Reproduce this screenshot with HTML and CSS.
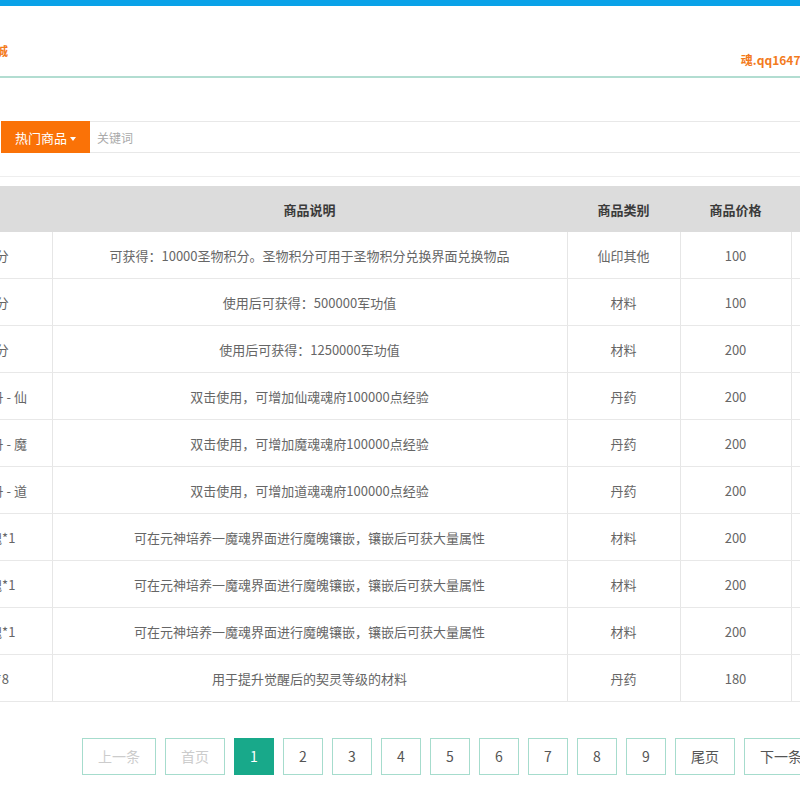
FILE: index.html
```html
<!DOCTYPE html>
<html lang="zh-CN">
<head>
  <meta charset="UTF-8" />
  <meta name="viewport" content="width=device-width, initial-scale=1.0" />
  <title>仙魂商城</title>
  <link rel="stylesheet" href="styles.css">
</head>
<body>
  <div class="topbar"></div>
  <div class="page">
    <div class="header">
      <span class="title">仙魂商城</span>
      <span class="contact">魂.qq1647208856</span>
    </div>

    <form class="search">
      <button type="button" class="hot">热门商品<span class="caret"></span></button>
      <input class="keyword" type="text" placeholder="关键词">
    </form>
    <div class="divider"></div>

    <table class="goods">
      <colgroup>
        <col class="c-name">
        <col class="c-desc">
        <col class="c-type">
        <col class="c-price">
        <col class="c-op">
      </colgroup>
      <thead>
        <tr>
          <th>名称</th>
          <th>商品说明</th>
          <th>商品类别</th>
          <th>商品价格</th>
          <th>操作</th>
        </tr>
      </thead>
      <tbody>
        <tr><td>圣物积分</td><td>可获得：10000圣物积分。圣物积分可用于圣物积分兑换界面兑换物品</td><td>仙印其他</td><td>100</td><td>兑换</td></tr>
        <tr><td>军功积分</td><td>使用后可获得：500000军功值</td><td>材料</td><td>100</td><td>兑换</td></tr>
        <tr><td>军功积分</td><td>使用后可获得：1250000军功值</td><td>材料</td><td>200</td><td>兑换</td></tr>
        <tr><td>魂府经验丹 - 仙</td><td>双击使用，可增加仙魂魂府100000点经验</td><td>丹药</td><td>200</td><td>兑换</td></tr>
        <tr><td>魂府经验丹 - 魔</td><td>双击使用，可增加魔魂魂府100000点经验</td><td>丹药</td><td>200</td><td>兑换</td></tr>
        <tr><td>魂府经验丹 - 道</td><td>双击使用，可增加道魂魂府100000点经验</td><td>丹药</td><td>200</td><td>兑换</td></tr>
        <tr><td>上品魔魄*1</td><td>可在元神培养一魔魂界面进行魔魄镶嵌，镶嵌后可获大量属性</td><td>材料</td><td>200</td><td>兑换</td></tr>
        <tr><td>中品魔魄*1</td><td>可在元神培养一魔魂界面进行魔魄镶嵌，镶嵌后可获大量属性</td><td>材料</td><td>200</td><td>兑换</td></tr>
        <tr><td>下品魔魄*1</td><td>可在元神培养一魔魂界面进行魔魄镶嵌，镶嵌后可获大量属性</td><td>材料</td><td>200</td><td>兑换</td></tr>
        <tr><td>契灵石*8</td><td>用于提升觉醒后的契灵等级的材料</td><td>丹药</td><td>180</td><td>兑换</td></tr>
      </tbody>
    </table>

    <div class="pager">
      <a class="disabled">上一条</a>
      <a class="disabled">首页</a>
      <a class="active">1</a>
      <a>2</a>
      <a>3</a>
      <a>4</a>
      <a>5</a>
      <a>6</a>
      <a>7</a>
      <a>8</a>
      <a>9</a>
      <a>尾页</a>
      <a>下一条</a>
    </div>
  </div>
</body>
</html>
```

FILE: styles.css
```css
body {
  margin: 0;
  font-family: "Noto Sans CJK SC", "Liberation Sans", sans-serif;
  font-size: 13px;
  color: #666;
  background-color: #fff;
  overflow: hidden;
}

.topbar {
  height: 6px;
  background-color: #0aa2e8;
}

.page {
  width: 1072px;
  margin-left: -86px;
}

.header {
  display: flex;
  align-items: flex-start;
  height: 70px;
  padding: 0 46px;
  border-bottom: 2px solid #b2ddd1;
}

.title {
  margin-top: 37px;
  font-size: 12px;
  font-weight: bold;
  line-height: 16px;
  color: #f37b1d;
}

.contact {
  margin-top: 46px;
  margin-left: auto;
  margin-right: 97px;
  font-size: 12px;
  font-weight: bold;
  line-height: 16px;
  color: #f37b1d;
}

.search {
  display: flex;
  height: 32px;
  margin: 43px 0 0 87px;
}

.hot {
  width: 89px;
  border: none;
  background-color: #fa7207;
  color: #fff;
  font-family: inherit;
  font-size: 13px;
  padding: 0;
}

.caret {
  display: inline-block;
  margin-left: 3px;
  vertical-align: middle;
  border-top: 4px solid #fff;
  border-left: 3px solid transparent;
  border-right: 3px solid transparent;
}

.keyword {
  flex: 1;
  border: 1px solid #e8e8e8;
  border-left: none;
  padding: 0 7px;
  font-family: inherit;
  font-size: 12px;
  outline: none;
}

.keyword::placeholder {
  color: #aaa;
}

.divider {
  margin-top: 23px;
  border-top: 1px solid #eeeeee;
}

.goods {
  width: 100%;
  margin-top: 9px;
  border-collapse: collapse;
  table-layout: fixed;
  text-align: center;
}

.c-name { width: 138px; }
.c-desc { width: 515px; }
.c-type { width: 113px; }
.c-price { width: 111px; }

.goods th {
  height: 46px;
  padding: 0;
  background-color: #dcdcdc;
  color: #3a3a3a;
  font-weight: bold;
}

.goods td {
  height: 46px;
  padding: 0;
  border-right: 1px solid #e6e6e6;
  border-bottom: 1px solid #e8e8e8;
  white-space: nowrap;
  overflow: hidden;
}

.pager {
  display: flex;
  justify-content: center;
  gap: 9px;
  margin-top: 36px;
}

.pager a {
  box-sizing: border-box;
  min-width: 40px;
  height: 37px;
  padding: 0 15px;
  border: 1px solid #a6dccd;
  color: #555;
  font-size: 14px;
  line-height: 35px;
  text-align: center;
  cursor: pointer;
}

.pager a.disabled {
  color: #ccc;
}

.pager a.active {
  background-color: #18a98a;
  border-color: #18a98a;
  color: #fff;
}
```
